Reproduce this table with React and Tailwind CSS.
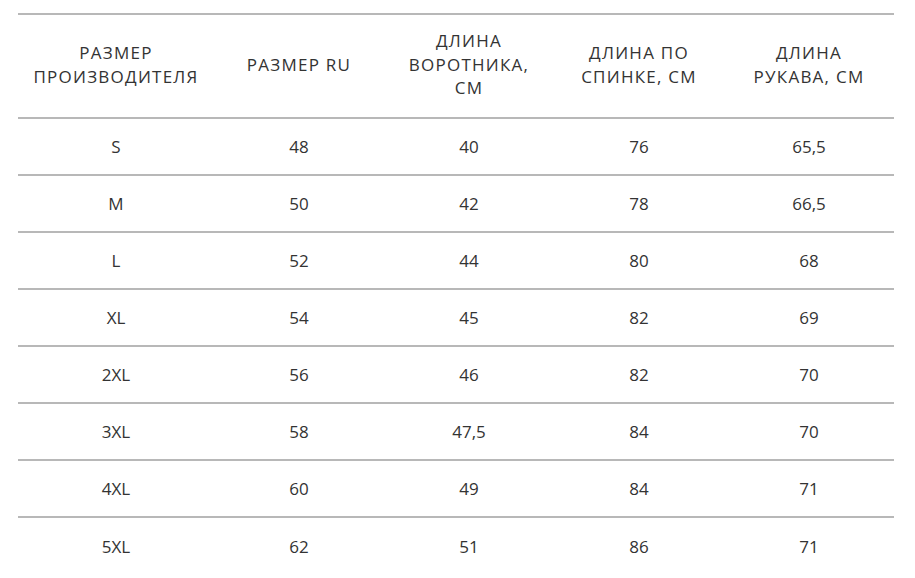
import React from "react";

const headers = [
  ["РАЗМЕР", "ПРОИЗВОДИТЕЛЯ"],
  ["РАЗМЕР RU"],
  ["ДЛИНА", "ВОРОТНИКА,", "СМ"],
  ["ДЛИНА ПО", "СПИНКЕ, СМ"],
  ["ДЛИНА", "РУКАВА, СМ"],
];

const rows = [
  ["S", "48", "40", "76", "65,5"],
  ["M", "50", "42", "78", "66,5"],
  ["L", "52", "44", "80", "68"],
  ["XL", "54", "45", "82", "69"],
  ["2XL", "56", "46", "82", "70"],
  ["3XL", "58", "47,5", "84", "70"],
  ["4XL", "60", "49", "84", "71"],
  ["5XL", "62", "51", "86", "71"],
];

const widths = ["w-[196px]", "w-[170px]", "w-[170px]", "w-[170px]", "w-[170px]"];

export default function App() {
  return (
    <div
      className="w-[915px] h-[578px] bg-white pt-[13px] px-[18px] overflow-hidden text-[#333] text-[17px]"
      style={{ fontFamily: '"Open Sans", "Liberation Sans", sans-serif' }}
    >
      <div className="w-[876px] border-t-2 border-[#b8b8b8]">
        <div className="flex h-[104px] border-b-2 border-[#b8b8b8]">
          {headers.map((h, i) => (
            <div key={i} className={`${widths[i]} flex flex-col items-center justify-center pb-[3px] leading-[23.5px] tracking-[1.25px] text-center`}>
              {h.map((l, j) => (
                <span key={j}>{l}</span>
              ))}
            </div>
          ))}
        </div>
        {rows.map((r, ri) => (
          <div
            key={ri}
            className={`flex h-[57px] ${ri < rows.length - 1 ? "border-b-2 border-[#b8b8b8]" : ""}`}
          >
            {r.map((c, ci) => (
              <div key={ci} className={`${widths[ci]} flex items-center justify-center`}>
                {c}
              </div>
            ))}
          </div>
        ))}
      </div>
    </div>
  );
}
